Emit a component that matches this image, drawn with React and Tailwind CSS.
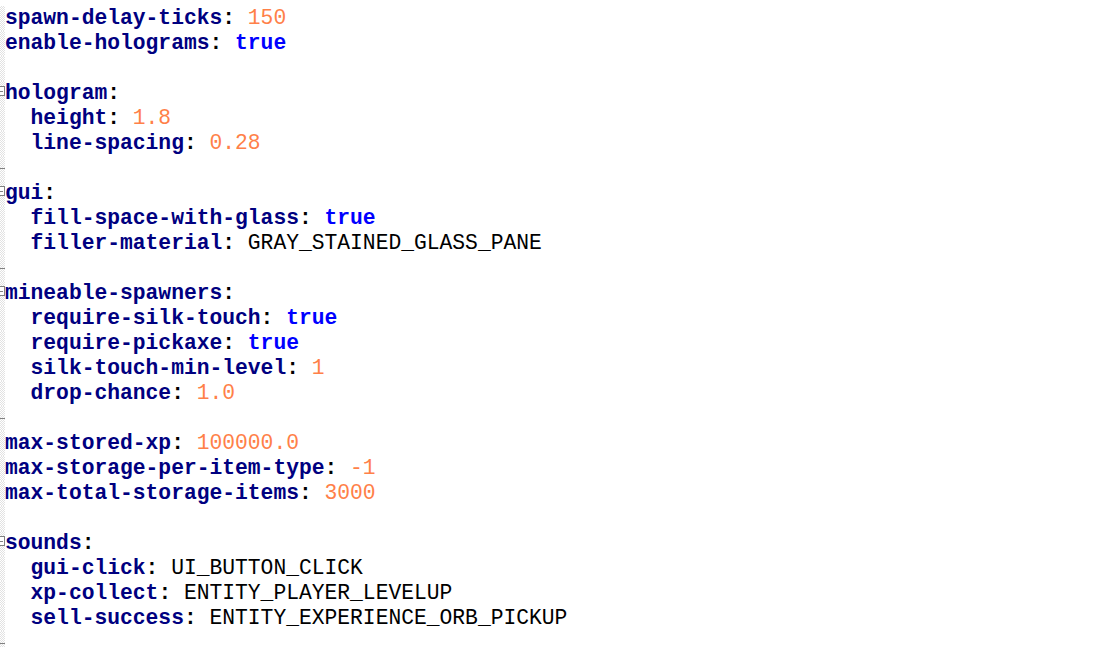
const lines = [
  { k: "spawn-delay-ticks", v: "150", t: "num" },
  { k: "enable-holograms", v: "true", t: "bool" },
  { blank: true },
  { k: "hologram", fold: true },
  { k: "height", v: "1.8", t: "num", indent: true },
  { k: "line-spacing", v: "0.28", t: "num", indent: true },
  { blank: true, tail: true },
  { k: "gui", fold: true },
  { k: "fill-space-with-glass", v: "true", t: "bool", indent: true },
  { k: "filler-material", v: "GRAY_STAINED_GLASS_PANE", t: "str", indent: true },
  { blank: true, tail: true },
  { k: "mineable-spawners", fold: true },
  { k: "require-silk-touch", v: "true", t: "bool", indent: true },
  { k: "require-pickaxe", v: "true", t: "bool", indent: true },
  { k: "silk-touch-min-level", v: "1", t: "num", indent: true },
  { k: "drop-chance", v: "1.0", t: "num", indent: true },
  { blank: true, tail: true },
  { k: "max-stored-xp", v: "100000.0", t: "num" },
  { k: "max-storage-per-item-type", v: "-1", t: "num" },
  { k: "max-total-storage-items", v: "3000", t: "num" },
  { blank: true },
  { k: "sounds", fold: true },
  { k: "gui-click", v: "UI_BUTTON_CLICK", t: "str", indent: true },
  { k: "xp-collect", v: "ENTITY_PLAYER_LEVELUP", t: "str", indent: true },
  { k: "sell-success", v: "ENTITY_EXPERIENCE_ORB_PICKUP", t: "str", indent: true },
  { blank: true, tail: true },
];

const valueClass = {
  num: "text-[#ff8048]",
  bool: "text-[#0000ff] font-bold",
  str: "text-black",
};

const Margin = ({ fold, tail }) => (
  <div className="relative w-[5px] shrink-0 self-stretch bg-[conic-gradient(#e2e2e2_25%,#ffffff_0_50%,#e2e2e2_0_75%,#ffffff_0)] bg-[length:2px_2px]">
    {fold && (
      <div className="absolute left-[-5px] top-[5px] flex h-[10px] w-[10px] items-center justify-center border border-[#808080] bg-white">
        <div className="h-px w-[5px] bg-[#808080]" />
      </div>
    )}
    {tail && <div className="absolute left-0 top-[12px] h-px w-[5px] bg-[#808080]" />}
  </div>
);

const App = () => {
  return (
    <div className="h-[647px] w-[1095px] overflow-hidden bg-white pt-[6px]">
      {lines.map((line, i) => (
        <div key={i} className="flex h-[25px]">
          <Margin fold={line.fold} tail={line.tail} />
          <pre className="m-0 whitespace-pre font-['Liberation_Mono',monospace] text-[21.3px] leading-[25px]">
            {!line.blank && (
              <>
                {line.indent && "  "}
                <span className="font-bold text-[#000080]">{line.k}</span>
                <span className="font-bold text-black">:</span>
                {line.v && (
                  <>
                    {" "}
                    <span className={valueClass[line.t]}>{line.v}</span>
                  </>
                )}
              </>
            )}
          </pre>
        </div>
      ))}
    </div>
  );
};

export default App;
